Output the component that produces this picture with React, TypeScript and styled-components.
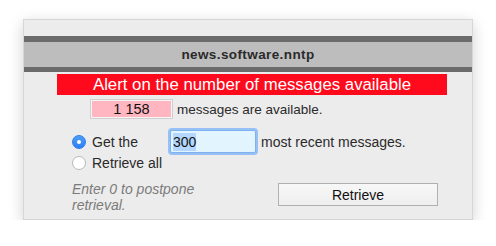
import React from "react";
import styled, { createGlobalStyle } from "styled-components";

const GlobalStyle = createGlobalStyle`
  html, body {
    margin: 0;
    padding: 0;
    background: #ffffff;
  }
  body {
    font-family: "Liberation Sans", Arial, sans-serif;
    color: #222;
  }
`;

const Page = styled.div`
  padding: 19px 0 0 23px;
`;

const Window = styled.div`
  width: 450px;
  height: 201px;
  box-sizing: border-box;
  background: #ececec;
  border: 1px solid #d6d6d6;
  box-shadow: 0 4px 14px rgba(0, 0, 0, 0.18);
  padding-top: 16px;
  display: flex;
  flex-direction: column;
`;

const Band = styled.div<{ $h: number }>`
  height: ${(p) => p.$h}px;
  background: #6b6b6b;
`;

const TitleBar = styled.div`
  height: 25px;
  background: #bdbdbd;
  display: flex;
  align-items: center;
  justify-content: center;
  font-size: 13.5px;
  font-weight: bold;
  letter-spacing: 0.4px;
  color: #2a2a2a;
`;

const Alert = styled.div`
  margin: 2px 0 0 33px;
  width: 390px;
  height: 21px;
  background: #ff0a1c;
  color: #fff;
  font-size: 16.8px;
  display: flex;
  align-items: center;
  justify-content: center;
`;

const Row = styled.div<{ $left: number; $top: number }>`
  display: flex;
  align-items: center;
  margin: ${(p) => p.$top}px 0 0 ${(p) => p.$left}px;
  font-size: 13.5px;
  color: #2a2a2a;
`;

const CountBox = styled.div`
  width: 83px;
  height: 20px;
  box-sizing: border-box;
  background: #ffb6c1;
  border: 1px solid #cfcfcf;
  box-shadow: inset 0 0 0 1px #f6f6f6;
  display: flex;
  align-items: center;
  justify-content: center;
  font-size: 14.5px;
  color: #111;
  margin-right: 4px;
`;

const Options = styled.div`
  display: grid;
  grid-template-columns: 98px 86px auto;
  grid-template-rows: 23px 20px;
  align-items: center;
  margin: 11px 0 0 48px;
  font-size: 14px;
  color: #2a2a2a;
`;

const RadioLabel = styled.label`
  display: flex;
  align-items: center;
  gap: 6px;
`;

const Radio = styled.span<{ $on?: boolean }>`
  width: 14px;
  height: 14px;
  box-sizing: border-box;
  border-radius: 50%;
  background: ${(p) => (p.$on ? "linear-gradient(#4f9ef8, #2c7ff5)" : "#fff")};
  border: 1px solid ${(p) => (p.$on ? "#2f7ee8" : "#b8b8b8")};
  display: flex;
  align-items: center;
  justify-content: center;
  &::after {
    content: "";
    width: 4px;
    height: 4px;
    border-radius: 50%;
    background: ${(p) => (p.$on ? "#fff" : "transparent")};
  }
`;

const NumberField = styled.div`
  width: 86px;
  height: 23px;
  box-sizing: border-box;
  background: #e2f5fe;
  border: 1px solid #7fb1ef;
  box-shadow: 0 0 0 2px #97c1f6;
  border-radius: 2px;
  display: flex;
  align-items: center;
  padding-left: 2px;
  font-size: 14px;
  color: #111;
`;

const Selected = styled.span`
  background: #b3d7fe;
  padding: 1px 0;
`;

const Trailing = styled.span`
  padding-left: 5px;
`;

const Footer = styled.div`
  display: flex;
  align-items: flex-start;
  margin: 8px 0 0 48px;
`;

const Hint = styled.div`
  width: 206px;
  font-size: 14px;
  font-style: italic;
  color: #7b7b7b;
  line-height: 16px;
`;

const Button = styled.button`
  width: 160px;
  height: 23px;
  margin-top: 2px;
  background: linear-gradient(#f7f7f7, #efefef);
  border: 1px solid #b0b0b0;
  font-family: inherit;
  font-size: 14px;
  color: #111;
  padding: 0;
`;

export default function App() {
  return (
    <>
      <GlobalStyle />
      <Page>
        <Window>
          <Band $h={6} />
          <TitleBar>news.software.nntp</TitleBar>
          <Band $h={5} />
          <Alert>Alert on the number of messages available</Alert>
          <Row $left={66} $top={4}>
            <CountBox>1 158</CountBox>
            messages are available.
          </Row>
          <Options>
            <RadioLabel>
              <Radio $on />
              Get the
            </RadioLabel>
            <NumberField>
              <Selected>300</Selected>
            </NumberField>
            <Trailing>most recent messages.</Trailing>
            <RadioLabel>
              <Radio />
              Retrieve all
            </RadioLabel>
          </Options>
          <Footer>
            <Hint>
              Enter 0 to postpone
              <br />
              retrieval.
            </Hint>
            <Button>Retrieve</Button>
          </Footer>
        </Window>
      </Page>
    </>
  );
}
